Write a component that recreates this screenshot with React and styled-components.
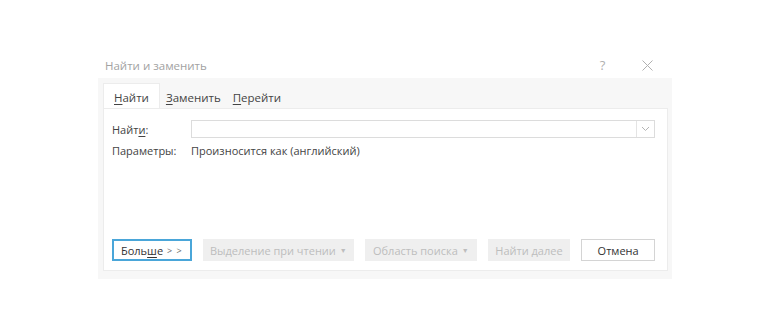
import React from 'react';
import styled, { createGlobalStyle } from 'styled-components';

const GlobalStyle = createGlobalStyle`
  html, body {
    margin: 0;
    background: #fff;
  }
  body {
    font-family: "Open Sans", "Noto Sans", "Liberation Sans", sans-serif;
    font-size: 11px;
    color: #444;
  }
`;

const Page = styled.div`
  padding: 52px 0 0 98px;
`;

const Dialog = styled.div`
  width: 574px;
  display: flex;
  flex-direction: column;
`;

const TitleBar = styled.div`
  height: 26px;
  display: flex;
  align-items: center;
  padding: 0 2px 0 7px;
  color: #a2a2a2;
  font-size: 11.5px;
`;

const Title = styled.span`
  flex: 1;
`;

const TitleIcon = styled.span`
  width: 45px;
  display: flex;
  justify-content: center;
  color: #b0b0b0;
  font-size: 13px;
`;

const Body = styled.div`
  background: #f7f7f7;
  padding: 5px 4px 8px 5px;
  display: flex;
  flex-direction: column;
`;

const Tabs = styled.div`
  display: flex;
  height: 25px;
`;

const Tab = styled.div`
  display: flex;
  align-items: center;
  padding: 3px ${p => (p.$active ? '10px' : '5px')} 0;
  margin-left: ${p => (p.$active ? '0' : '0')};
  background: ${p => (p.$active ? '#fff' : 'transparent')};
  border: 1px solid ${p => (p.$active ? '#ececec' : 'transparent')};
  border-bottom: none;
  color: #444;
  font-size: 11.5px;
`;

const Key = styled.span`
  text-decoration: underline;
  text-underline-offset: 2px;
`;

const Panel = styled.div`
  background: #fff;
  border: 1px solid #ececec;
  height: 141px;
  padding: 11px 12px 9px 8px;
  display: flex;
  flex-direction: column;
`;

const Row = styled.div`
  display: flex;
  align-items: center;
  height: ${p => p.$h || 18}px;
  margin-bottom: ${p => p.$mb || 0}px;
`;

const Label = styled.span`
  width: 79px;
  flex-shrink: 0;
`;

const Combo = styled.div`
  flex: 1;
  height: 18px;
  box-sizing: border-box;
  border: 1px solid #dcdcdc;
  display: flex;
  justify-content: flex-end;
`;

const ComboArrow = styled.div`
  width: 17px;
  border-left: 1px solid #e4e4e4;
  display: flex;
  align-items: center;
  justify-content: center;
`;

const Spacer = styled.div`
  flex: 1;
`;

const Buttons = styled.div`
  display: flex;
  gap: 11px;
`;

const Button = styled.div`
  height: 22px;
  box-sizing: border-box;
  width: ${p => p.$w}px;
  display: flex;
  align-items: center;
  justify-content: center;
  font-size: 11px;
  color: ${p => (p.$disabled ? '#bdbdbd' : '#333')};
  background: ${p => (p.$disabled ? '#efefef' : '#fff')};
  border: ${p =>
    p.$focus ? '2px solid #4aa6d9' : p.$disabled ? '1px solid #efefef' : '1px solid #d4d4d4'};
`;

const Caret = styled.span`
  font-size: 7px;
  color: #bdbdbd;
  margin-left: 4px;
`;

const Arrows = styled.span`
  color: #666;
  font-size: 9px;
  letter-spacing: 1px;
  margin-left: 4px;
`;

const Chevron = () => (
  <svg width="9" height="6" viewBox="0 0 9 6">
    <path d="M1 1l3.5 3.5L8 1" fill="none" stroke="#b5b5b5" strokeWidth="1" />
  </svg>
);

const Close = () => (
  <svg width="11" height="11" viewBox="0 0 11 11">
    <path d="M0.5 0.5l10 10M10.5 0.5l-10 10" stroke="#b0b0b0" strokeWidth="1" />
  </svg>
);

const App = () => {
  return (
    <>
      <GlobalStyle />
      <Page>
        <Dialog>
          <TitleBar>
            <Title>Найти и заменить</Title>
            <TitleIcon>?</TitleIcon>
            <TitleIcon><Close /></TitleIcon>
          </TitleBar>
          <Body>
            <Tabs>
              <Tab $active><span><Key>Н</Key>айти</span></Tab>
              <Tab><span><Key>З</Key>аменить</span></Tab>
              <Tab><span><Key>П</Key>ерейти</span></Tab>
            </Tabs>
            <Panel>
              <Row $mb={3}>
                <Label>Найт<Key>и</Key>:</Label>
                <Combo>
                  <ComboArrow><Chevron /></ComboArrow>
                </Combo>
              </Row>
              <Row>
                <Label>Параметры:</Label>
                <span>Произносится как (английский)</span>
              </Row>
              <Spacer />
              <Buttons>
                <Button $w={80} $focus>
                  <span>Боль<Key>ш</Key>е</span>
                  <Arrows>&gt; &gt;</Arrows>
                </Button>
                <Button $w={152} $disabled>
                  <span>Выделение при чтении</span>
                  <Caret>▼</Caret>
                </Button>
                <Button $w={112} $disabled>
                  <span>Область поиска</span>
                  <Caret>▼</Caret>
                </Button>
                <Button $w={83} $disabled>Найти далее</Button>
                <Button $w={74}>Отмена</Button>
              </Buttons>
            </Panel>
          </Body>
        </Dialog>
      </Page>
    </>
  );
};

export default App;
